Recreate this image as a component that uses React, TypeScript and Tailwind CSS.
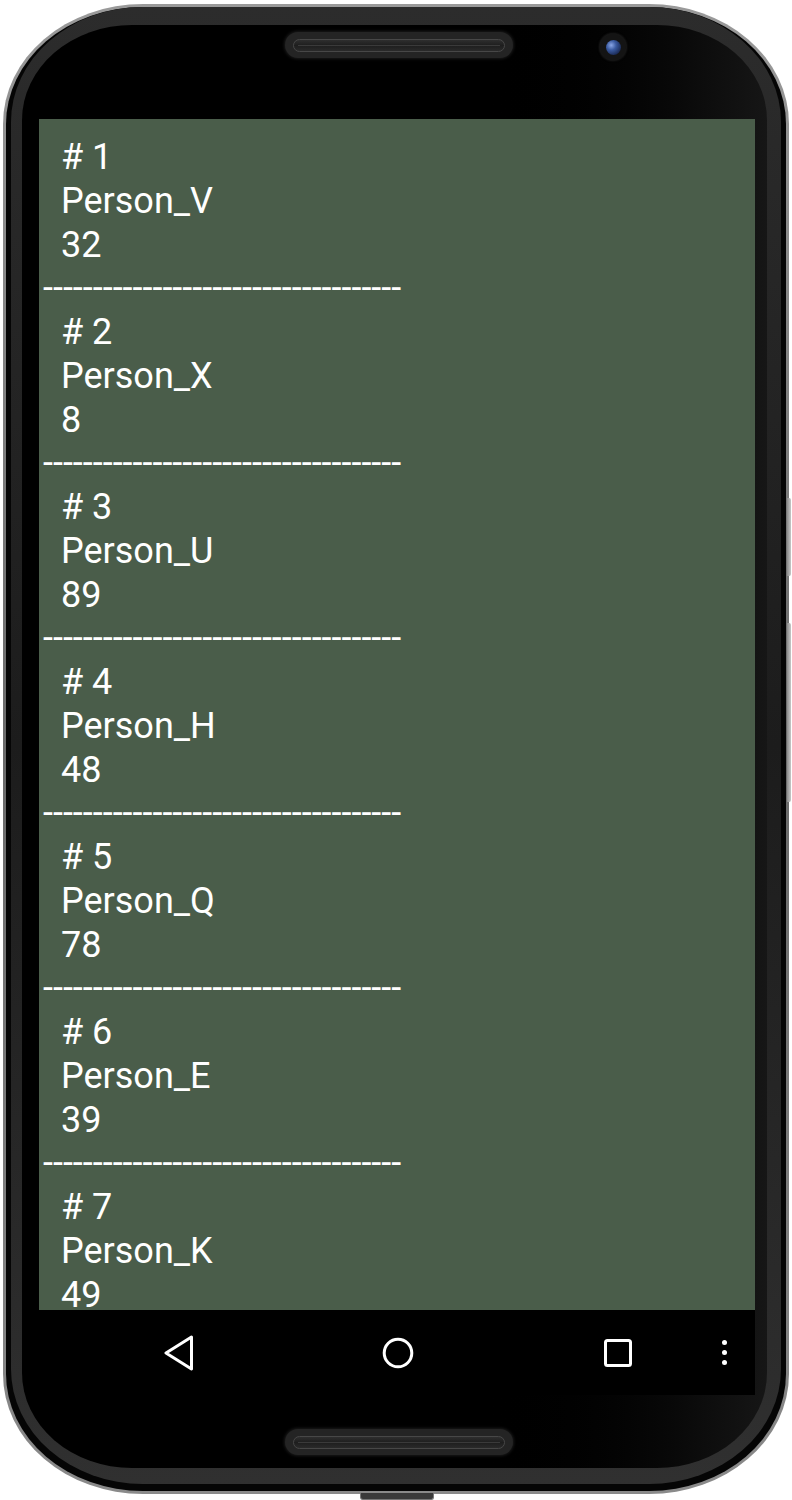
import React from "react";

const people = [
  { n: 1, name: "Person_V", v: 32 },
  { n: 2, name: "Person_X", v: 8 },
  { n: 3, name: "Person_U", v: 89 },
  { n: 4, name: "Person_H", v: 48 },
  { n: 5, name: "Person_Q", v: 78 },
  { n: 6, name: "Person_E", v: 39 },
  { n: 7, name: "Person_K", v: 49 },
];

function Speaker() {
  return (
    <div className="w-[228px] h-[26px] rounded-full bg-[#242424] shadow-[0_0_3px_1px_#1a1a1a] flex items-center px-[8px]">
      <div className="w-full h-[13px] rounded-full border border-[#474747] bg-gradient-to-b from-[#2e2e2e] via-[#1e1e1e] to-[#2a2a2a] flex items-center px-[4px]">
        <div className="w-full h-[1px] bg-[#3a3a3a]" />
      </div>
    </div>
  );
}

export default function App() {
  return (
    <div className="w-[792px] h-[1500px] bg-white relative overflow-hidden pt-[4px] pl-[3px]">
      {/* side buttons */}
      <div className="absolute left-[787px] top-[498px] w-[4px] h-[78px] rounded-r-[2px] bg-gradient-to-r from-[#8a8a8a] to-[#c8c8c8]" />
      <div className="absolute left-[787px] top-[623px] w-[4px] h-[179px] rounded-r-[2px] bg-gradient-to-r from-[#8a8a8a] to-[#c8c8c8]" />
      {/* bottom port */}
      <div className="absolute left-[360px] top-[1493px] w-[74px] h-[7px] rounded-b-[3px] bg-[#3a3a3a] border-x border-b border-[#777]" />

      {/* phone body */}
      <div className="w-[786px] h-[1490px] rounded-[140px/120px] bg-gradient-to-b from-[#9a9a9a] via-[#6a6a6a] to-[#8a8a8a] p-[3px]">
        <div className="w-full h-full rounded-[137px/117px] bg-[#050505] pt-0 pl-[5px] pr-[5px] pb-[7px]">
          <div className="w-full h-full rounded-[132px/115px] bg-gradient-to-b from-[#2c2c2c] via-[#1c1c1c] to-[#303030] pt-[18px] pl-[11px] pr-[14px] pb-[16px]">
            {/* face */}
            <div className="w-full h-full rounded-[110px/95px] bg-gradient-to-r from-black via-black via-60% to-[#161616] flex flex-col overflow-hidden">
              {/* top area */}
              <div className="h-[94px] flex items-start">
                <div className="ml-[263px] mt-[7px]">
                  <Speaker />
                </div>
                <div className="ml-[87px] mt-[9px] w-[26px] h-[26px] rounded-full bg-[#141414] flex items-center justify-center shadow-[0_0_2px_1px_#1c1c1c]">
                  <div className="w-[15px] h-[15px] rounded-full bg-[radial-gradient(circle_at_35%_35%,#8aa6e6_0%,#3a5aa0_35%,#1a2a55_75%,#0d1630_100%)]" />
                </div>
              </div>

              {/* screen */}
              <div className="ml-[17px] w-[716px] h-[1191px] bg-[#4a5d4a] overflow-hidden pt-[17px] font-['Roboto',sans-serif] text-white text-[36px] leading-[43.75px]">
                {people.map((p) => (
                  <div key={p.n}>
                    <div className="pl-[22px]"># {p.n}</div>
                    <div className="pl-[22px]">{p.name}</div>
                    <div className="pl-[22px]">{p.v}</div>
                    <div className="pl-[4px] whitespace-pre">------------------------------------</div>
                  </div>
                ))}
              </div>

              {/* nav bar */}
              <div className="ml-[17px] w-[716px] h-[85px] bg-black flex items-center">
                <svg className="ml-[124px]" width="32" height="36" viewBox="0 0 32 36">
                  <path d="M28.5 2 L3 18 L28.5 34 Z" fill="none" stroke="white" strokeWidth="3" strokeLinejoin="round" />
                </svg>
                <svg className="ml-[187px]" width="32" height="32" viewBox="0 0 32 32">
                  <circle cx="16" cy="16" r="13.8" fill="none" stroke="white" strokeWidth="3" />
                </svg>
                <svg className="ml-[189px]" width="30" height="30" viewBox="0 0 30 30">
                  <rect x="2.5" y="2.5" width="25" height="25" rx="2" fill="none" stroke="white" strokeWidth="3" />
                </svg>
                <div className="ml-[89px] flex flex-col gap-[5px]">
                  <div className="w-[5px] h-[5px] rounded-full bg-white" />
                  <div className="w-[5px] h-[5px] rounded-full bg-white" />
                  <div className="w-[5px] h-[5px] rounded-full bg-white" />
                </div>
              </div>

              {/* bottom area */}
              <div className="flex-1 flex items-start">
                <div className="ml-[263px] mt-[34px]">
                  <Speaker />
                </div>
              </div>
            </div>
          </div>
        </div>
      </div>
    </div>
  );
}
